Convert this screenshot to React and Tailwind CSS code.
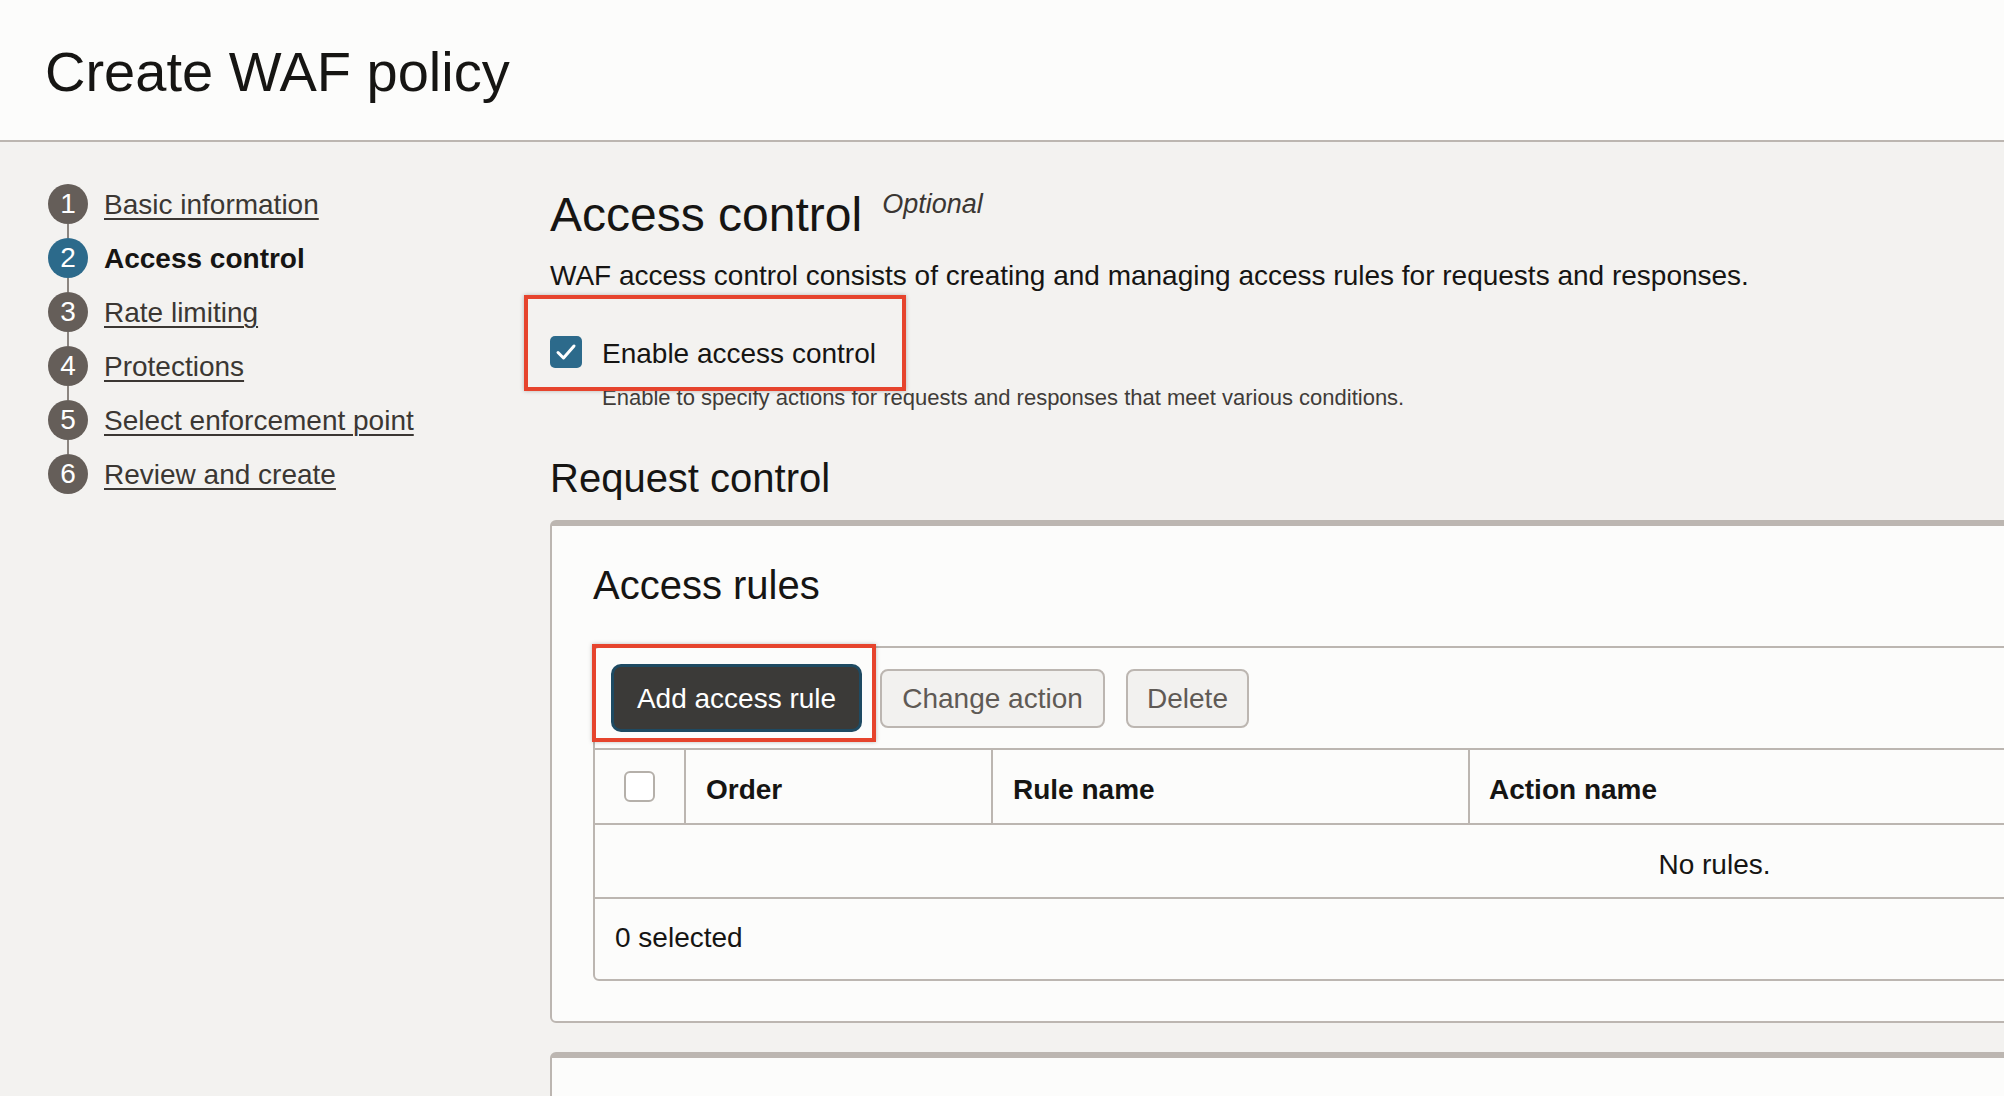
import React from "react";

const steps = [
  { n: 1, label: "Basic information" },
  { n: 2, label: "Access control", active: true },
  { n: 3, label: "Rate limiting" },
  { n: 4, label: "Protections" },
  { n: 5, label: "Select enforcement point" },
  { n: 6, label: "Review and create" },
];

function Steps() {
  return (
    <nav className="w-[550px] shrink-0 pl-[48px] pt-[42px]">
      {steps.map((s, i) => (
        <div key={s.n}>
          {i > 0 && <div className="ml-[19px] h-[14px] w-[2px] bg-[#8b8580]" />}
          <div className="flex h-[40px] items-center gap-[16px]">
            <div
              className={
                s.active
                  ? "flex h-[40px] w-[40px] items-center justify-center rounded-full bg-[#2c6a8b] text-[28px] leading-none text-white"
                  : "flex h-[40px] w-[40px] items-center justify-center rounded-full bg-[#655e59] text-[28px] leading-none text-white"
              }
            >
              {s.n}
            </div>
            {s.active ? (
              <span className="mt-[2px] text-[28px] font-bold leading-none text-[#161513]">{s.label}</span>
            ) : (
              <a className="mt-[2px] text-[28px] leading-none text-[#3b3733] underline decoration-[2px] underline-offset-[4px]">
                {s.label}
              </a>
            )}
          </div>
        </div>
      ))}
    </nav>
  );
}

function CheckIcon() {
  return (
    <svg viewBox="0 0 32 32" className="h-[32px] w-[32px]">
      <path d="M8 16.5 L13.5 22 L24 10" fill="none" stroke="white" strokeWidth="3" strokeLinecap="round" strokeLinejoin="round" />
    </svg>
  );
}

function AccessRules() {
  return (
    <div className="relative mt-[41px] rounded-[6px] border-2 border-[#bcb6b1]">
      {/* toolbar */}
      <div className="relative flex h-[100px] items-center pl-[16px]">
        <div className="pointer-events-none absolute left-[-3px] top-[-4px] h-[98px] w-[284px] border-4 border-[#e6442d] shadow-[0_0_4px_rgba(0,0,0,0.25)]" />
        <button className="h-[68px] w-[251px] rounded-[10px] border-[3px] border-[#1e4a62] bg-[#3b3a38] pt-[2px] text-[28px] leading-none text-white">
          Add access rule
        </button>
        <button className="ml-[18px] h-[59px] w-[225px] rounded-[8px] border-2 border-[#bcb6b1] bg-[#f2f1ef] pt-[2px] text-[28px] leading-none text-[#5f5a55]">
          Change action
        </button>
        <button className="ml-[21px] h-[59px] w-[123px] rounded-[8px] border-2 border-[#bcb6b1] bg-[#f2f1ef] pt-[2px] text-[28px] leading-none text-[#5f5a55]">
          Delete
        </button>
      </div>
      {/* header */}
      <div className="flex h-[77px] border-y-2 border-[#bcb6b1] text-[28px] font-bold leading-none text-[#161513]">
        <div className="flex w-[91px] shrink-0 items-center justify-center border-r-2 border-[#bcb6b1]">
          <div className="h-[31px] w-[31px] rounded-[6px] border-2 border-[#b5b0aa] bg-white" />
        </div>
        <div className="flex w-[307px] shrink-0 items-center border-r-2 border-[#bcb6b1] pl-[20px] pt-[7px]">Order</div>
        <div className="flex w-[477px] shrink-0 items-center border-r-2 border-[#bcb6b1] pl-[20px] pt-[7px]">Rule name</div>
        <div className="flex items-center pl-[19px] pt-[7px]">Action name</div>
      </div>
      {/* empty row */}
      <div className="flex h-[74px] items-center justify-center border-b-2 border-[#bcb6b1] pt-[7px] text-[28px] leading-none text-[#161513]">
        No rules.
      </div>
      {/* footer */}
      <div className="flex h-[80px] items-center pb-[2px] pl-[20px] text-[28px] leading-none text-[#161513]">
        0 selected
      </div>
    </div>
  );
}

export default function App() {
  return (
    <div className="h-[1096px] w-full overflow-hidden bg-[#f3f2f0] font-['Liberation_Sans',Arial,sans-serif] text-[#161513]">
      <header className="h-[142px] border-b-2 border-[#bcb6b1] bg-[#fcfcfb] pl-[45px] pt-[44px]">
        <h1 className="text-[56px] font-normal leading-none">Create WAF policy</h1>
      </header>

      <div className="flex">
        <Steps />

        <main className="w-[2329px] shrink-0 pt-[49px]">
          <div className="flex items-start">
            <h2 className="text-[48px] font-normal leading-none">Access control</h2>
            <span className="ml-[20px] text-[27px] italic leading-none text-[#3b3733]">Optional</span>
          </div>
          <p className="mt-[23px] text-[28px] leading-none">
            WAF access control consists of creating and managing access rules for requests and responses.
          </p>

          <div className="relative mt-[45px] flex items-center gap-[20px]">
            <div className="pointer-events-none absolute left-[-26px] top-[-40px] z-10 h-[96px] w-[382px] border-4 border-[#e6442d] shadow-[0_0_4px_rgba(0,0,0,0.25)]" />
            <div className="flex h-[32px] w-[32px] items-center justify-center rounded-[5px] bg-[#2c6a8b]">
              <CheckIcon />
            </div>
            <span className="mt-[5px] text-[28px] leading-none">Enable access control</span>
          </div>
          <p className="mt-[19px] pl-[52px] text-[22px] leading-none text-[#403c38]">
            Enable to specify actions for requests and responses that meet various conditions.
          </p>

          <h3 className="mt-[49px] text-[40px] font-normal leading-none">Request control</h3>

          <section className="mt-[22px] rounded-[6px] border-2 border-t-[6px] border-[#bcb6b1] bg-[#fcfcfb] px-[41px] pb-[40px] pt-[39px]">
            <h4 className="text-[40px] font-normal leading-none">Access rules</h4>
            <AccessRules />
          </section>

          <section className="mt-[29px] h-[200px] rounded-[6px] border-2 border-t-[6px] border-[#bcb6b1] bg-[#fcfcfb]" />
        </main>
      </div>
    </div>
  );
}
